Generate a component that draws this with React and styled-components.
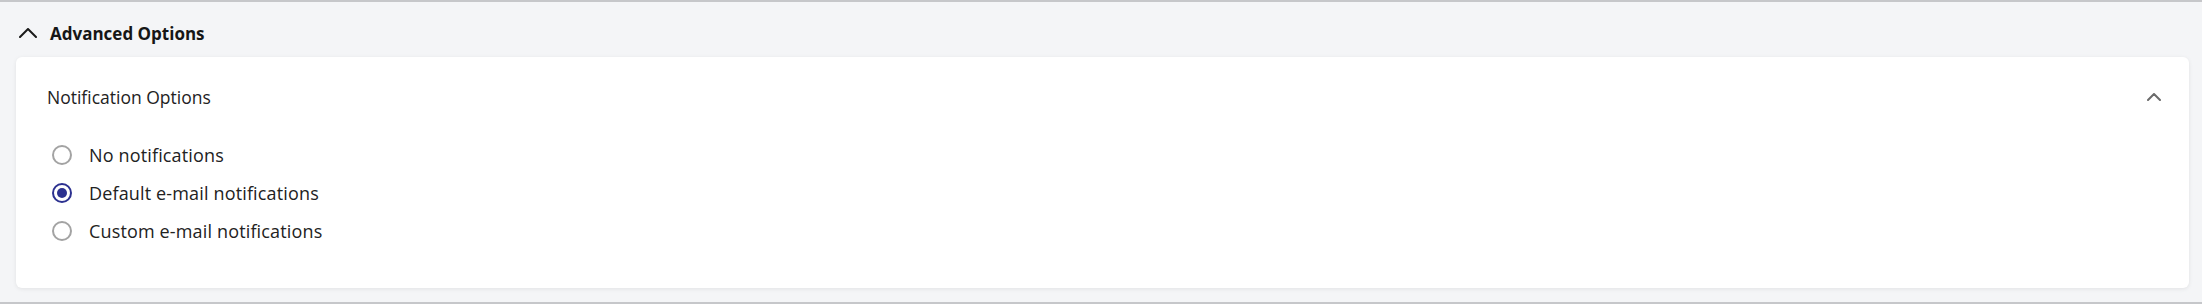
import React, { useState } from "react";
import styled, { createGlobalStyle } from "styled-components";

const GlobalStyle = createGlobalStyle`
  html, body { margin: 0; padding: 0; background: #f4f5f7; }
  body { font-family: "Open Sans", "Noto Sans", Lato, sans-serif; }
  * { box-sizing: border-box; }
`;

const Section = styled.section`
  height: 304px;
  background: #f4f5f7;
  border-top: 2px solid #c6c7ca;
  border-bottom: 2px solid #c6c7ca;
  padding: 0 13px 0 16px;
  display: flex;
  flex-direction: column;
`;

const Header = styled.button`
  height: 55px;
  display: flex;
  align-items: center;
  gap: 13px;
  padding: 7px 0 0 3px;
  border: 0;
  background: transparent;
  cursor: pointer;
  font-family: inherit;
  font-size: 17px;
  font-weight: 700;
  color: #161616;
  text-align: left;
`;

const Card = styled.div`
  background: #ffffff;
  border-radius: 6px;
  box-shadow: 0 1px 4px rgba(0, 0, 0, 0.08);
  padding: 28px 28px 38px 31px;
`;

const CardHeader = styled.div`
  height: 24px;
  display: flex;
  align-items: center;
  justify-content: space-between;
  font-size: 17.5px;
  color: #222;
`;

const Options = styled.div`
  margin-top: 27px;
  display: flex;
  flex-direction: column;
  padding-left: 5px;
`;

const OptionRow = styled.label`
  height: 38px;
  display: flex;
  align-items: center;
  gap: 17px;
  font-size: 18px;
  letter-spacing: 0.15px;
  color: #222;
  cursor: pointer;
`;

const RadioCircle = styled.span`
  width: 20px;
  height: 20px;
  border-radius: 50%;
  border: 2px solid ${(p) => (p.$checked ? "#2c3190" : "#a3a3a3")};
  display: flex;
  align-items: center;
  justify-content: center;
  flex: none;
  &::after {
    content: "";
    width: 10px;
    height: 10px;
    border-radius: 50%;
    background: #2c3190;
    display: ${(p) => (p.$checked ? "block" : "none")};
  }
`;

const Chevron = ({ w, h, color, sw }) => (
  <svg width={w} height={h} viewBox={`0 0 ${w} ${h}`} fill="none">
    <path
      d={`M${sw / 2} ${h - sw / 2} L${w / 2} ${sw / 2} L${w - sw / 2} ${h - sw / 2}`}
      stroke={color}
      strokeWidth={sw}
      strokeLinecap="round"
      strokeLinejoin="round"
    />
  </svg>
);

const options = [
  "No notifications",
  "Default e-mail notifications",
  "Custom e-mail notifications",
];

export default function App() {
  const [sel, setSel] = useState(1);
  return (
    <>
      <GlobalStyle />
      <Section>
        <Header>
          <Chevron w={18} h={10} color="#1a1a1a" sw={2} />
          Advanced Options
        </Header>
        <Card>
          <CardHeader>
            <span>Notification Options</span>
            <Chevron w={14} h={8} color="#6b6b6b" sw={2} />
          </CardHeader>
          <Options>
            {options.map((o, i) => (
              <OptionRow key={o} onClick={() => setSel(i)}>
                <RadioCircle $checked={sel === i} />
                {o}
              </OptionRow>
            ))}
          </Options>
        </Card>
      </Section>
    </>
  );
}
